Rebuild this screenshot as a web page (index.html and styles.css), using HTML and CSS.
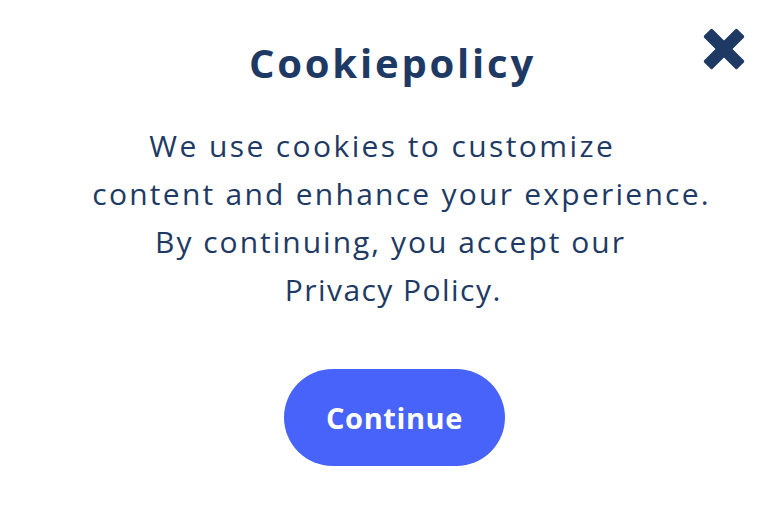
FILE: index.html
```html
<!DOCTYPE html>
<html lang="en">
<head>
<meta charset="utf-8">
<link rel="stylesheet" href="styles.css">
</head>
<body>
<div class="dialog">
  <button class="close" aria-label="Close">
    <svg viewBox="0 0 44 44" width="44" height="44">
      <rect x="-1.5" y="16" width="47" height="12" rx="1.5" transform="rotate(45 22 22)" fill="#1e3a64"/>
      <rect x="-1.5" y="16" width="47" height="12" rx="1.5" transform="rotate(-45 22 22)" fill="#1e3a64"/>
    </svg>
  </button>
  <h1 class="title">Cookiepolicy</h1>
  <p class="message">
    <span class="line l1">We use cookies to customize</span>
    <span class="line l2">content and enhance your experience.</span>
    <span class="line l3">By continuing, you accept our</span>
    <span class="line l4">Privacy Policy.</span>
  </p>
  <div class="actions">
    <button class="continue">Continue</button>
  </div>
</div>
</body>
</html>
```
FILE: styles.css
```css
html, body {
  margin: 0;
  padding: 0;
  background: #ffffff;
}
.dialog {
  position: relative;
  width: 768px;
  height: 512px;
  font-family: "Open Sans", "Noto Sans", sans-serif;
  color: #1e3a64;
  text-align: center;
}
.close {
  position: absolute;
  top: 27px;
  left: 702px;
  width: 44px;
  height: 44px;
  padding: 0;
  border: 0;
  background: none;
}
.close svg { display: block; }
.title {
  margin: 0;
  padding-top: 37px;
  padding-left: 17px;
  font-size: 40px;
  font-weight: 700;
  letter-spacing: 2.8px;
  line-height: 52px;
}
.message {
  margin: 33px 0 0;
  font-size: 30px;
  letter-spacing: 2.25px;
  line-height: 48px;
}
.line { display: block; }
.l1 { padding-right: 3.5px; letter-spacing: 2.4px; }
.l2 { padding-left: 35.25px; }
.l3 { padding-left: 13px; letter-spacing: 2px; }
.l4 { padding-left: 18.5px; letter-spacing: 1.45px; }
.actions {
  display: flex;
  justify-content: center;
  margin-top: 55px;
  padding-left: 21px;
}
.continue {
  width: 221px;
  height: 97px;
  padding: 0;
  border: 0;
  border-radius: 49px;
  background: #4763fa;
  color: #ffffff;
  font-family: "Open Sans", "Noto Sans", sans-serif;
  font-size: 29px;
  font-weight: 700;
  letter-spacing: 0.6px;
}
```
